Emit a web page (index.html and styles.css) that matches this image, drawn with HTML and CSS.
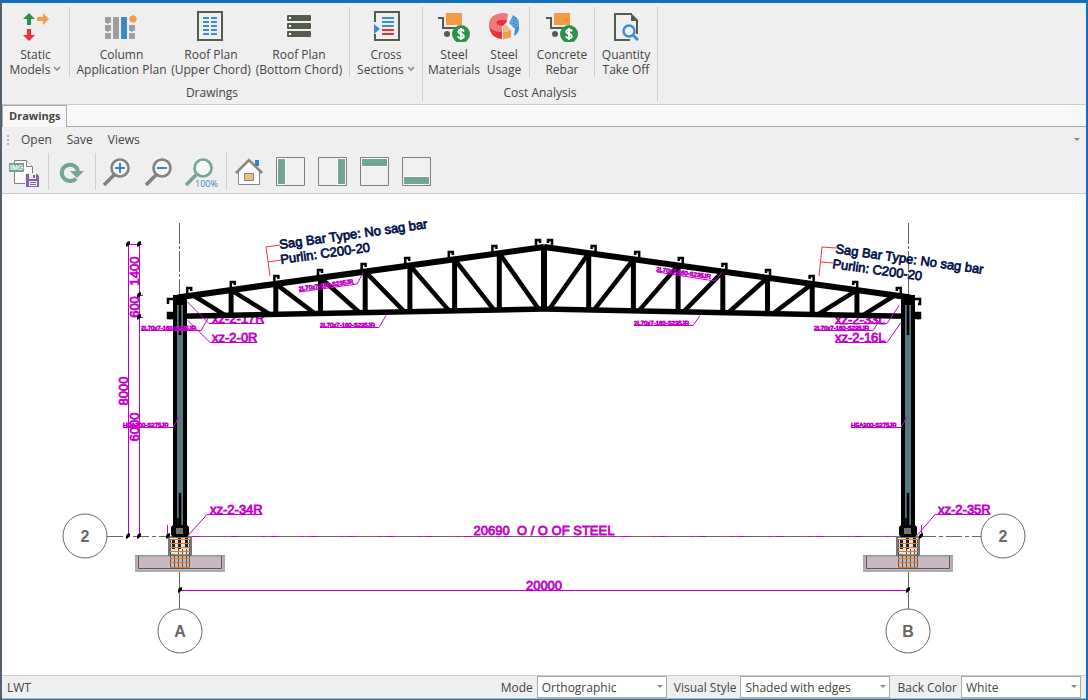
FILE: index.html
```html
<!DOCTYPE html>
<html lang="en">
<head>
  <meta charset="UTF-8">
  <title>Drawings</title>
  <link rel="stylesheet" href="styles.css">
</head>
<body>
  <svg class="defs" aria-hidden="true">
    <symbol id="i-cart" viewBox="0 0 32 32">
      <path fill="#f59b45" d="M8 3h16v12H8z"/>
      <path fill="none" stroke="#545c50" stroke-width="2" d="M0 8h5v10h13"/>
      <circle cx="9" cy="24" r="3" fill="#545c50"/>
      <circle cx="23" cy="24" r="9" fill="#2b9348"/>
      <path fill="none" stroke="#fff" stroke-width="1.8" d="M26 21.500q-1-2-3-2t-2.700 2q0 1.800 2.700 2.400t2.900 2.400q-.4 2-2.900 2t-3.200-2M23 18v12"/>
    </symbol>
    <symbol id="i-caret" viewBox="0 0 8 6"><path fill="none" stroke="#8a8a8a" stroke-width="1.600" d="M1 1l3 3 3-3"/></symbol>
  </svg>

  <div class="window">
    <div class="ribbon">
      <section class="group">
        <div class="buttons">
          <button class="tool w-models">
            <svg viewBox="0 0 32 32"><path fill="#2b9348" d="M9 3l6 6h-4v6H7V9H3z"/><path fill="#ec2f36" d="M7 19h4v6h4l-6 6-6-6h4z"/><path fill="#f59b45" d="M17 7h6V3l6 6-6 6v-4h-6z"/></svg>
            <span>Static<br>Models <svg class="caret"><use href="#i-caret"/></svg></span>
          </button>
          <div class="sep"></div>
          <button class="tool w-column">
            <svg viewBox="0 0 32 32"><path fill="#a0a0a0" d="M-1 7h6v6h-6zM-1 15h6v6h-6zM-1 23h6v6h-6zM7 7h6v22H7zM23 15h6v6h-6zM23 23h6v6h-6z"/><path fill="#3b8ed0" d="M15 7h6v22h-6z"/><path stroke="#1d6aa8" stroke-dasharray="1 3" d="M17.500 9v20M19.500 11v18"/><path stroke="#888" stroke-dasharray="1 3" d="M9.500 9v19M11.500 11v17M1.500 9v19M25.500 17v12"/><circle cx="27" cy="9" r="3" fill="#f59b45"/><path stroke="#f59b45" stroke-width="1.500" d="M27 5v8M23 9h8M24.200 6.200l5.600 5.600M29.800 6.200l-5.600 5.600"/></svg>
            <span>Column<br>Application Plan</span>
          </button>
          <button class="tool w-upper">
            <svg viewBox="0 0 32 32"><path fill="none" stroke="#545c50" stroke-width="2" d="M3 2h24v28H3z"/><path stroke="#3b8ed0" stroke-width="2" d="M8 8h6M16 8h6M8 12h6M16 12h6M8 16h6M16 16h6M8 20h6M16 20h6M8 24h6M16 24h6"/></svg>
            <span>Roof Plan<br>(Upper Chord)</span>
          </button>
          <button class="tool w-bottom">
            <svg viewBox="0 0 32 32"><path fill="#545c50" d="M5 5h22q1 0 1 1v4q0 1-1 1H5q-1 0-1-1V6q0-1 1-1zM5 13h22q1 0 1 1v4q0 1-1 1H5q-1 0-1-1v-4q0-1 1-1zM5 21h22q1 0 1 1v4q0 1-1 1H5q-1 0-1-1v-4q0-1 1-1z"/><path fill="#fff" d="M6 7h2v2H6zM6 15h2v2H6zM6 23h2v2H6z"/></svg>
            <span>Roof Plan<br>(Bottom Chord)</span>
          </button>
          <div class="sep"></div>
          <button class="tool w-cross">
            <svg viewBox="0 0 32 32"><path fill="none" stroke="#545c50" stroke-width="2" d="M5 12V2h24v28H5v-6"/><path fill="#3b8ed0" d="M4 14l6 5-6 5z"/><path stroke="#3b8ed0" stroke-width="2" d="M12 8h12M12 12h12M12 16h12"/><path stroke="#ec2f36" stroke-width="2" d="M12 20h12M12 24h12"/></svg>
            <span>Cross<br>Sections <svg class="caret"><use href="#i-caret"/></svg></span>
          </button>
        </div>
        <div class="caption">Drawings</div>
      </section>
      <section class="group">
        <div class="buttons">
          <button class="tool w-materials"><svg><use href="#i-cart"/></svg><span>Steel<br>Materials</span></button>
          <button class="tool w-usage">
            <svg viewBox="0 0 32 32"><path fill="#e8303a" d="M1 13q0 15 13 16v-9l-4-5z"/><path fill="#f2777b" d="M16 3C6 3 1 8 1 14c0 5 5 8 13 8v-6c-4 0-6-1-6-3s3-3.500 6-3.500 5 1 5 1l1-6.500q-2-1-4-1z"/><path fill="#e8303a" d="M8 13q0-3.500 6-3.500t5 2l-4 4.500q-6 0-7-3z"/><path fill="#f7b878" d="M15 22v-6l3-1 5 5q-3 2-8 2z"/><path fill="#f59b45" d="M15 22q5 0 8-2v7q-3 2-8 2z"/><path fill="#5ba5dc" d="M25 5q6 3 6 8 0 4-4 6l-6-6z"/><path fill="#3b8ed0" d="M27 19q4-2 4-6v6q-1 5-5 7z"/><path stroke="#2675b4" stroke-dasharray="1 2" d="M25.500 7v11M28 8v10"/></svg>
            <span>Steel<br>Usage</span>
          </button>
          <div class="sep"></div>
          <button class="tool w-concrete"><svg><use href="#i-cart"/></svg><span>Concrete<br>Rebar</span></button>
          <div class="sep"></div>
          <button class="tool w-quantity">
            <svg viewBox="0 0 32 32"><path fill="none" stroke="#545c50" stroke-width="2" d="M20 30H5V4h17M27 11v13"/><path fill="#545c50" d="M21 3l7 7v1h-7z"/><circle cx="19" cy="21" r="5.500" fill="none" stroke="#3b8ed0" stroke-width="2.400"/><path stroke="#3b8ed0" stroke-width="3" d="M23 25l5 5"/></svg>
            <span>Quantity<br>Take Off</span>
          </button>
        </div>
        <div class="caption">Cost Analysis</div>
      </section>
    </div>

    <div class="tabs"><button class="tab">Drawings</button></div>

    <nav class="menu">
      <i class="grip"></i>
      <button>Open</button>
      <button>Save</button>
      <button>Views</button>
      <i class="arrow"></i>
    </nav>

    <div class="toolbar">
      <button aria-label="Save image">
        <svg viewBox="0 0 32 32"><path fill="#fff" stroke="#808080" d="M7.500 4.500h12l6 6v17h-18z"/><path fill="#fff" stroke="#808080" d="M19.500 4.500v6h6"/><path fill="#72a593" d="M2 7h15v9H2z"/><text x="3" y="14" class="img-text">IMG</text><path fill="#efefef" d="M18 17h14v15H18z"/><path fill="#8560a8" d="M19 18h11l2 2v11H19z"/><path fill="#efefef" d="M22 18h7v5h-7zM22 25h8v5h-8z"/><path fill="#8560a8" d="M26 19h2v3h-2zM23 26h6v1h-6zM23 28h6v1h-6z"/></svg>
      </button>
      <div class="sep"></div>
      <button aria-label="Refresh">
        <svg viewBox="0 0 32 32"><path fill="none" stroke="#72a593" stroke-width="4" d="M22 22.500A8.200 8.200 0 1 1 24 15"/><path fill="#72a593" d="M16 15h14l-7 7z"/></svg>
      </button>
      <div class="sep"></div>
      <button aria-label="Zoom in">
        <svg viewBox="0 0 32 32"><path stroke="#858081" stroke-width="3.500" d="M3 29l10-10"/><circle cx="19" cy="12" r="8.500" fill="#f7f7f7" stroke="#858081" stroke-width="2.600"/><path stroke="#3387c4" stroke-width="2" d="M14 12h10M19 7v10"/></svg>
      </button>
      <button aria-label="Zoom out">
        <svg viewBox="0 0 32 32"><path stroke="#858081" stroke-width="3.500" d="M3 29l10-10"/><circle cx="19" cy="12" r="8.500" fill="#f7f7f7" stroke="#858081" stroke-width="2.600"/><path stroke="#3387c4" stroke-width="2" d="M14 12h10"/></svg>
      </button>
      <button aria-label="Zoom 100%">
        <svg viewBox="0 0 32 32"><path stroke="#72a593" stroke-width="3.500" d="M1 29l10-10"/><circle cx="18" cy="12" r="8.500" fill="#f7f7f7" stroke="#72a593" stroke-width="2.600"/><text x="10" y="31" class="pct-text">100%</text></svg>
      </button>
      <div class="sep"></div>
      <button aria-label="Home">
        <svg viewBox="0 0 32 32"><path fill="#2b87cc" d="M23 4h4v6h-4z"/><path fill="#fff" stroke="#858585" d="M6.500 15.500l10.500-11 10.500 11v13h-21z"/><path fill="none" stroke="#858585" stroke-width="2.600" d="M4 17L17 4l13 13"/><path fill="#f5bd7e" stroke="#858585" d="M12.500 17.500h9v7h-9z"/></svg>
      </button>
      <button aria-label="Left view"><svg viewBox="0 0 32 32"><path fill="#f0f0f0" stroke="#808080" d="M2.500 1.500h28v28h-28z"/><path fill="#72a593" stroke="#fff" d="M3.500 2.500h8v26h-8z"/></svg></button>
      <button aria-label="Right view"><svg viewBox="0 0 32 32"><path fill="#f0f0f0" stroke="#808080" d="M2.500 1.500h28v28h-28z"/><path fill="#72a593" stroke="#fff" d="M21.500 2.500h8v26h-8z"/></svg></button>
      <button aria-label="Top view"><svg viewBox="0 0 32 32"><path fill="#f0f0f0" stroke="#808080" d="M2.500 1.500h28v28h-28z"/><path fill="#72a593" stroke="#fff" d="M3.500 2.500h26v8h-26z"/></svg></button>
      <button aria-label="Bottom view"><svg viewBox="0 0 32 32"><path fill="#f0f0f0" stroke="#808080" d="M2.500 1.500h28v28h-28z"/><path fill="#72a593" stroke="#fff" d="M3.500 20.500h26v8h-26z"/></svg></button>
    </div>

    <main class="canvas">
      <svg viewBox="2 194 1084 481" id="drawing">
        <defs>
          <!-- column with its pedestal and footing -->
          <g id="column">
            <path fill="#c9b8c1" stroke="#a5aeab" stroke-width="2" d="M136 556h88v15h-88z"/>
            <path fill="none" stroke="#555" d="M138.500 556v12.500h83V556"/>
            <path fill="none" stroke="#8f9a97" d="M136 555.500h88"/>
            <path fill="#e3e3e3" stroke="#777" stroke-width="2" d="M169 537h22v18h-22z"/>
            <path stroke="#222" stroke-width="3" d="M173.500 539v10M179.500 538v11M186.500 538v10"/>
            <path stroke="#555" d="M170.500 540v28M174.500 555v13M178.500 549v19M182.500 549v19M186.500 549v19M189.500 540v28"/>
            <path stroke="#e07b24" d="M170 539.500h20M170 543.500h20M170 547.500h20M170 551.500h20M174 554.500h14M170 558.500h20M170 562.500h20M170 567.500h20"/>
            <path d="M173 295h14v233h-14z"/>
            <path fill="#55777e" d="M177 305h6v220h-6z"/>
            <path stroke="#000" stroke-width="2.500" d="M180 296v39M180 493v34"/>
            <path stroke="#000" stroke-width="1.500" d="M178 518v10"/>
            <path d="M173 525h14l2 2v8l-2 2h-14l-2-2v-8z"/>
            <path fill="#777071" d="M176 528h7v6h-7z"/>
          </g>
          <path id="tick" d="M-2 0l1-2 3-1v3l-2 2-2 1z"/>
        </defs>

        <g class="axis">
          <path stroke-dasharray="21 2 3 2" d="M179.500 223v73M908.500 223v73"/>
          <path stroke-dasharray="16 3 4 3" d="M107 536.500h62M920 536.500h61"/>
          <path d="M192 536.500h704M179.500 571v38M908.500 571v38"/>
          <circle cx="85" cy="536" r="22"/><circle cx="1003" cy="536" r="22"/>
          <circle cx="180" cy="631" r="22"/><circle cx="908" cy="631" r="22"/>
        </g>
        <g class="axis-name">
          <text x="85" y="542">2</text><text x="1003" y="542">2</text>
          <text x="180" y="637">A</text><text x="908" y="637">B</text>
        </g>

        <g class="dim">
          <path d="M128.500 244v293M139.500 244v293M128 244.500h14M139 295.500h4M139 317.500h4M167.500 525v11M921.500 525v11"/>
          <path d="M180 590.500h728"/>
          <path stroke-dasharray="7 24 3 5" d="M192 536.500h704"/>
          <text x="544" y="535">20690&#160; O / O OF STEEL</text>
          <text x="544" y="590">20000</text>
          <text transform="translate(139 271) rotate(-90)">1400</text>
          <text transform="translate(139 307) rotate(-90)">600</text>
          <text transform="translate(128 391) rotate(-90)">8000</text>
          <text transform="translate(139 427) rotate(-90)">6000</text>
        </g>

        <g class="mark">
          <text x="212" y="323">xz-2-17R</text>
          <text x="212" y="342">xz-2-0R</text>
          <text x="835" y="324">xz-2-33L</text>
          <text x="835" y="342">xz-2-16L</text>
          <text x="210" y="514">xz-2-34R</text>
          <text x="938" y="514">xz-2-35R</text>
          <path d="M210 342.500h47M836 323.500h51M836 342.500h51M207 514.500h55M935 514.500h55"/>
        </g>

        <!-- roof truss, filled in by truss.js -->
        <g id="truss" class="truss"></g>
        <use href="#column"/>
        <use href="#column" x="728"/>
        <path fill="none" stroke="#000" stroke-width="2.500" d="M175 299h-7v5M175 304v-4M175 313h-7v5h3M175 318h-8M912 299h8v5h-2M912 313h8v5h-3M912 317h8"/>

        <g class="mark">
          <path d="M264 323.500h-55l-22-22M210 342.500l-22-22M887 323.500l12-18M887 342.500l14-20M207 514.500l-19 21M935 514.500l-18 21"/>
          <path d="M141 330.500h60l7-12M320 327.500h59l7-12M634 325.500h59l7-10M814 330.500h59l8-12M123 427.500h50l6-11M851 427.500h50l6-11M299 292l58-8 6-11M657 272l58 9 7-9"/>
        </g>
        <g class="small">
          <text x="141" y="330">2L70x7-160-S235JR</text>
          <text x="320" y="327">2L70x7-160-S235JR</text>
          <text x="634" y="325">2L70x7-160-S235JR</text>
          <text x="814" y="330">2L70x7-160-S235JR</text>
          <text x="123" y="427">HEA300-S275JR</text>
          <text x="851" y="427">HEA300-S275JR</text>
          <text transform="translate(299 291) rotate(-8)">2L70x7-160-S235JR</text>
          <text transform="translate(656 271) rotate(8)">2L70x7-160-S235JR</text>
        </g>

        <g class="leader">
          <path d="M280 245l-14 2 4 29M281 260l-13 2M836 248l-14-1-3 29M833 263l-12-1"/>
        </g>
        <g class="note">
          <text transform="translate(280 249) rotate(-8)">Sag Bar Type: No sag bar</text>
          <text transform="translate(281 264) rotate(-8)">Purlin: C200-20</text>
          <text transform="translate(835 253) rotate(8)">Sag Bar Type: No sag bar</text>
          <text transform="translate(832 268) rotate(8)">Purlin: C200-20</text>
        </g>

        <use href="#tick" x="128" y="244"/><use href="#tick" x="139" y="244"/>
        <use href="#tick" x="139" y="295"/><use href="#tick" x="139" y="317"/>
        <use href="#tick" x="128" y="536"/><use href="#tick" x="139" y="536"/>
        <use href="#tick" x="168" y="536"/><use href="#tick" x="921" y="536"/>
        <use href="#tick" x="180" y="590"/><use href="#tick" x="908" y="590"/>
      </svg>
    </main>

    <footer class="status">
      <span class="status-name">LWT</span>
      <label for="mode">Mode</label>
      <div class="combo combo-mode"><select id="mode"><option>Orthographic</option><option>Perspective</option></select></div>
      <label for="visual">Visual Style</label>
      <div class="combo combo-visual"><select id="visual"><option>Shaded with edges</option><option>Wireframe</option></select></div>
      <label for="back">Back Color</label>
      <div class="combo combo-back"><select id="back"><option>White</option><option>Black</option></select></div>
    </footer>
  </div>

  <script src="truss.js"></script>
</body>
</html>
```
FILE: truss.js
```js
const MID = 544;
const BAY = 44.7;
const truss = document.getElementById("truss");

function addPath(d, width) {
  const p = document.createElementNS("http://www.w3.org/2000/svg", "path");
  p.setAttribute("d", d);
  p.setAttribute("stroke-width", width);
  truss.appendChild(p);
}

const topY = (k) => 247 + k * 6.15;
const bottomY = (k) => 309 + k * 0.95;

// side -1 is the left half, 1 is the right half
[-1, 1].forEach((side) => {
  const x = (k) => MID + side * BAY * k;

  addPath(`M${x(0)} ${topY(0)}L${x(8.2)} ${topY(8.2)}`, 6);
  addPath(`M${x(0)} ${bottomY(0)}L${x(8.4)} ${bottomY(8)}`, 5.5);

  for (let k = 0; k < 8; k++) {
    addPath(`M${x(k)} ${topY(k)}V${bottomY(k)}`, k ? 5 : 6);
    const start = k === 7 ? 7.85 : k + 1;
    addPath(`M${x(start)} ${topY(start)}L${x(k + 0.12)} ${bottomY(k)}`, 4.5);
  }

  // purlins
  for (let k = 0; k < 9; k++) {
    const px = MID + side * (7 + k * 43.6);
    const py = topY((px - MID) * side / BAY) - 9;
    addPath(`M${px + side} ${py + 8}V${py + 1}H${px - side * 3}v3`, 2.5);
  }
});
```
FILE: styles.css
```css
* {
  box-sizing: border-box;
}

body {
  margin: 0;
  font-family: "Open Sans", "Noto Sans", sans-serif;
  font-size: 12px;
  color: #444;
  background: #efefef;
}

button {
  font: inherit;
  color: inherit;
  background: none;
  border: none;
  padding: 0;
  cursor: pointer;
}

.defs {
  position: absolute;
  width: 0;
  height: 0;
}

.window {
  display: flex;
  flex-direction: column;
  min-height: 100vh;
  border: 2px solid #1270c0;
  border-top-width: 3px;
  border-left-color: #56616e;
  border-bottom-width: 1px;
}

/* ribbon */
.ribbon {
  display: flex;
  height: 102px;
  padding: 4px 0 3px;
  border-bottom: 1px solid #cacaca;
}

.group {
  display: flex;
  flex-direction: column;
  border-right: 1px solid #cfcfcf;
}

.buttons {
  display: flex;
  height: 74px;
}

.sep {
  width: 1px;
  background: #cfcfcf;
}

.tool {
  display: flex;
  flex-direction: column;
  align-items: center;
  line-height: 15px;
  white-space: nowrap;
}

.tool > svg {
  width: 32px;
  height: 32px;
  margin: 3px 0 5px;
  overflow: visible;
}

.tool span {
  display: block;
}

.caret {
  width: 8px;
  height: 6px;
  vertical-align: 2px;
}

.w-models { width: 67px; }
.w-column { width: 103px; }
.w-upper { width: 76px; }
.w-bottom { width: 100px; }
.w-cross { width: 72px; }
.w-materials { width: 62px; }
.w-usage { width: 38px; margin-right: 6px; }
.w-concrete { width: 64px; }
.w-quantity { width: 62px; }

.caption {
  text-align: center;
  line-height: 18px;
  padding-top: 7px;
}

/* document tab */
.tabs {
  display: flex;
  height: 22px;
  background: #f8f8f8;
  border-bottom: 1px solid #a9a9a9;
}

.tab {
  height: 22px;
  padding: 0 6px 2px;
  background: #f8f8f8;
  border: 1px solid #a9a9a9;
  border-bottom: none;
  font-size: 11px;
  font-weight: bold;
}

.menu {
  display: flex;
  align-items: center;
  gap: 15px;
  height: 25px;
  padding: 0 6px 0 5px;
}

.grip {
  width: 2px;
  height: 10px;
  margin-right: -3px;
  background: repeating-linear-gradient(#b5b5b5 0 2px, transparent 2px 4px);
}

.arrow {
  margin-left: auto;
  border: 3px solid transparent;
  border-top-color: #888;
  border-bottom: none;
}

.toolbar {
  display: flex;
  gap: 5px;
  height: 42px;
  padding: 1px 5px 3px;
  border-bottom: 1px solid #cacaca;
}

.toolbar .sep {
  margin-left: -1px;
}

.toolbar button {
  width: 37px;
}

.toolbar svg {
  display: block;
  width: 32px;
  height: 32px;
  overflow: visible;
}

.img-text {
  font: bold 7px "Liberation Sans", sans-serif;
  fill: #fff;
}

.pct-text {
  font: 9px "Open Sans", sans-serif;
  fill: #3387c4;
}

/* drawing */
.canvas {
  flex: 1;
  display: flex;
  background: #fff;
}

.canvas svg {
  width: 100%;
  font-family: "Liberation Sans", Arial, sans-serif;
}

.axis {
  fill: none;
  stroke: #6d6566;
}

.axis-name {
  font-size: 16px;
  font-weight: bold;
  text-anchor: middle;
  fill: #6d6566;
}

.dim,
.mark,
.small {
  fill: #c400cc;
}

.dim path,
.mark path {
  fill: none;
  stroke: #c400cc;
}

.dim text,
.mark text {
  font-size: 13px;
  stroke: #c400cc;
  stroke-width: 0.8;
}

.dim text {
  text-anchor: middle;
}

.small text {
  font-size: 6px;
  stroke: #c400cc;
  stroke-width: 0.8;
}

.truss {
  fill: none;
  stroke: #000;
}

.leader {
  fill: none;
  stroke: #e63a3a;
}

.note {
  font-size: 13px;
  fill: #001048;
}

.note text {
  stroke: #001048;
  stroke-width: 0.7;
}

/* status bar */
.status {
  display: flex;
  align-items: center;
  height: 24px;
  padding: 1px 5px 1px 5px;
  border-top: 1px solid #cacaca;
  border-bottom: 1px solid #b5b5b5;
}

.status-name {
  margin-right: auto;
}

.status label {
  margin: 0 4px 0 7px;
}

.combo {
  position: relative;
}

.combo::after {
  content: "";
  position: absolute;
  right: 4px;
  top: 9px;
  border: 3px solid transparent;
  border-top-color: #888;
  border-bottom: none;
  pointer-events: none;
}

.combo select {
  display: block;
  appearance: none;
  width: 100%;
  height: 22px;
  padding: 0 4px;
  font: inherit;
  color: inherit;
  background: #fff;
  border: 1px solid #a9a9a9;
  border-radius: 0;
}

.combo-mode { width: 130px; }
.combo-visual { width: 150px; }
.combo-back { width: 120px; }
```
